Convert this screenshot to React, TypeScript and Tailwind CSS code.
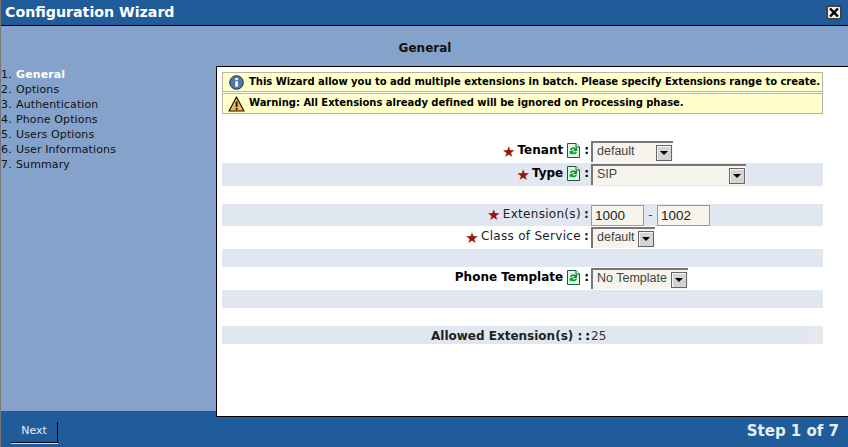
import React from "react";

const font = { fontFamily: '"DejaVu Sans", Verdana, sans-serif' };
const formFont = { fontFamily: '"Liberation Sans", Arial, sans-serif' };

const steps = ["General", "Options", "Authentication", "Phone Options", "Users Options", "User Informations", "Summary"];

function Refresh() {
  return (
    <svg width="13" height="15" viewBox="0 0 13 15" className="shrink-0">
      <path d="M0.5 0.5H9L12.5 4V14.5H0.5Z" fill="#e4f5e6" stroke="#1a5a3c" />
      <path d="M9 0.5V4H12.5" fill="#fff" stroke="#1a5a3c" />
      <path d="M3 6.5C4 3.8 7.5 3.6 9 5L10.2 3.8V8H6L7.4 6.6C6.4 5.8 5.2 6 4.6 7.2Z" fill="#0c9a30" />
      <path d="M10 9C9 11.7 5.5 11.9 4 10.5L2.8 11.7V7.8H7L5.6 9.2C6.6 10 7.8 9.6 8.4 8.4Z" fill="#0c9a30" />
    </svg>
  );
}

function Star() {
  return <span className="text-[#9c1010] text-[15px] font-bold leading-none mr-[2px] translate-y-[2px]">★</span>;
}

function Select({ value, width }: { value: string; width: string }) {
  return (
    <div className={`flex items-center justify-between h-[21px] bg-[#f6f4ec] border-t-2 border-l-2 border-t-[#777] border-l-[#777] pl-[4px] pr-[1px] ${width}`}>
      <span className="text-[12.5px] text-[#444] pb-[2px]" style={formFont}>{value}</span>
      <span className="flex items-center justify-center w-[16px] h-[16px] bg-[#d4d4d4] border border-[#666] shadow-[inset_1px_1px_0_#f4f4f4]">
        <span className="w-0 h-0 border-x-[4px] border-x-transparent border-t-[4px] border-t-black" />
      </span>
    </div>
  );
}

function TextBox({ value }: { value: string }) {
  return (
    <div className="w-[53px] h-[21px] bg-[#f6f4ec] border border-[#999] pl-[3px] text-[13.5px] text-[#222] leading-[20px]" style={formFont}>
      {value}
    </div>
  );
}

function Row({ label, required, bold, refresh, striped, short, children }: {
  label: string;
  required?: boolean;
  bold?: boolean;
  refresh?: boolean;
  striped?: boolean;
  short?: boolean;
  children: React.ReactNode;
}) {
  return (
    <div className={`flex items-center ${short ? "h-[22px]" : "h-[23px]"} ${striped ? "bg-[#e0e7f0]" : ""}`}>
      <div className={`flex items-center justify-end w-[369px] pb-[3px] ${bold ? "font-bold text-black text-[12px]" : "text-[12px] text-[#222] tracking-[0.3px]"}`}>
        {required && <Star />}
        <span className={refresh ? "mr-[4px]" : ""}>{label}</span>
        {refresh && <Refresh />}
        <span className={`${refresh ? "ml-[4px]" : "ml-[3px]"} mr-[2px] font-bold text-[12px]`}>:</span>
      </div>
      {children}
    </div>
  );
}

export default function App() {
  return (
    <div className="flex flex-col w-[848px] h-[447px] overflow-hidden bg-[#84a2ca] border-l border-l-[#777]" style={font}>
      {/* Title bar */}
      <header className="flex items-center justify-between h-[26px] shrink-0 bg-[#1f5c99] border-b border-b-black pl-[4px] pr-[6px]">
        <h1 className="text-[14.2px] font-bold text-white">Configuration Wizard</h1>
        <button className="flex items-center justify-center w-[16px] h-[15px] rounded-[3px] bg-[#eeeeee] border-2 border-[#444]">
          <svg width="10" height="9" viewBox="0 0 10 9"><path d="M1 0.5L9 8.5M9 0.5L1 8.5" stroke="#000" strokeWidth="2.4" /></svg>
        </button>
      </header>

      <h2 className="h-[40px] shrink-0 flex items-center justify-center text-[12px] font-bold text-[#111] pt-[3px] pl-[1px]">General</h2>

      {/* Body */}
      <div className="flex flex-1 min-h-0">
        <nav className="w-[215px] shrink-0 text-[11px] leading-[15px] text-[#111] pt-[1px] tracking-[0.12px]">
          {steps.map((s, i) => (
            <div key={s} className="flex">
              <span className="w-[15px]">{i + 1}.</span>
              <span className={i === 0 ? "font-bold text-white" : ""}>{s}</span>
            </div>
          ))}
        </nav>
        <main className="relative z-10 flex-1 h-[351px] bg-white border-t border-l border-b border-black pl-[5px] pr-[25px] pt-[5px]">
          <div className="flex items-center gap-[5px] h-[20px] bg-[#ffffcc] border border-[#b5b5a0] pl-[6px] text-[10px] font-bold text-black whitespace-nowrap tracking-[-0.03px]">
            <svg width="15" height="15" viewBox="0 0 15 15" className="shrink-0">
              <circle cx="7.5" cy="7.5" r="6.8" fill="#4f78a8" stroke="#1c2f48" />
              <rect x="6.3" y="6.3" width="2.6" height="5.4" fill="#fff" />
              <rect x="6.3" y="3" width="2.6" height="2.2" fill="#fff" />
            </svg>
            <span className="-translate-y-[1px]">This Wizard allow you to add multiple extensions in batch. Please specify Extensions range to create.</span>
          </div>
          <div className="flex items-center gap-[4px] h-[21px] mt-[1px] bg-[#ffffcc] border border-[#b5b5a0] pl-[5px] text-[10px] font-bold text-black whitespace-nowrap tracking-[-0.03px]">
            <svg width="17" height="16" viewBox="0 0 17 16" className="shrink-0">
              <path d="M8.5 1L16 15H1Z" fill="#f2b84b" stroke="#111" strokeWidth="1.2" strokeLinejoin="round" />
              <rect x="7.7" y="5.5" width="1.8" height="5.5" fill="#111" />
              <rect x="7.7" y="12" width="1.8" height="1.8" fill="#111" />
            </svg>
            <span className="-translate-y-[1px]">Warning: All Extensions already defined will be ignored on Processing phase.</span>
          </div>

          <div className="mt-[26px]">
            <Row label="Tenant" required bold refresh>
              <Select value="default" width="w-[82px]" />
            </Row>
            <Row label="Type" required bold refresh striped>
              <Select value="SIP" width="w-[155px]" />
            </Row>
            <div className="h-[18px]" />
            <Row label="Extension(s)" required striped short>
              <div className="flex items-center">
                <TextBox value="1000" />
                <span className="w-[13px] text-center text-[12px] text-[#444]">-</span>
                <TextBox value="1002" />
              </div>
            </Row>
            <Row label="Class of Service" required>
              <Select value="default" width="w-[64px]" />
            </Row>
            <div className="h-[18px] bg-[#e0e7f0]" />
            <Row label="Phone Template" bold refresh>
              <Select value="No Template" width="w-[97px]" />
            </Row>
            <div className="h-[18px] bg-[#e0e7f0]" />
            <div className="h-[18px]" />
            <div className="flex items-center h-[18px] bg-[#e0e7f0] text-[12px]">
              <div className="flex-1 flex items-center pt-[2px]">
                <span className="ml-[209px] font-bold text-[#222]">Allowed Extension(s) :</span>
                <span className="ml-[3px] mr-[1px] font-bold">:</span>
                <span className="text-[#333]">25</span>
              </div>
              <div className="w-[14px] h-full bg-[#e8e8ea]" />
            </div>
          </div>
        </main>
      </div>

      {/* Footer */}
      <footer className="flex items-center justify-between h-[36px] shrink-0 bg-[#1f5c99] pl-[10px] pr-[9px]">
        <button className="w-[47px] h-[21px] mt-[6px] border-r border-b border-r-black border-b-black text-[11px] text-[#e8eef5] shadow-[0_1px_0_#cfe0f0]">Next</button>
        <span className="text-[15px] font-bold text-[#e8eef5] mt-[4px]">Step 1 of 7</span>
      </footer>
    </div>
  );
}
